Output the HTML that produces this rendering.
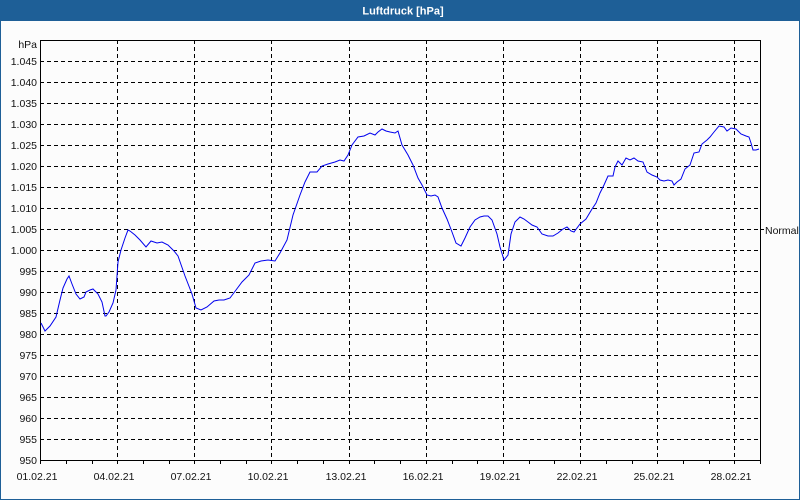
<!DOCTYPE html>
<html><head><meta charset="utf-8"><style>
html,body{margin:0;padding:0;width:800px;height:500px;overflow:hidden;background:#fcfcfc}
svg{display:block}
text{font-family:"Liberation Sans",sans-serif;font-size:10.5px;fill:#111}
</style></head><body>
<svg width="800" height="500" viewBox="0 0 800 500">
<rect x="0" y="0" width="800" height="500" fill="#fcfcfc"/>
<rect x="0" y="0" width="800" height="21" fill="#1e5f97"/>
<rect x="0.5" y="0.5" width="799" height="499" fill="none" stroke="#1e5f97"/>
<text x="403" y="14.5" text-anchor="middle" style="font-weight:bold;fill:#fff;font-size:11px">Luftdruck [hPa]</text>
<g stroke="#000" stroke-width="1" stroke-dasharray="4,3">
<line x1="40" y1="61.5" x2="760" y2="61.5"/><line x1="40" y1="82.5" x2="760" y2="82.5"/><line x1="40" y1="103.5" x2="760" y2="103.5"/><line x1="40" y1="124.5" x2="760" y2="124.5"/><line x1="40" y1="145.5" x2="760" y2="145.5"/><line x1="40" y1="166.5" x2="760" y2="166.5"/><line x1="40" y1="187.5" x2="760" y2="187.5"/><line x1="40" y1="208.5" x2="760" y2="208.5"/><line x1="40" y1="229.5" x2="760" y2="229.5"/><line x1="40" y1="250.5" x2="760" y2="250.5"/><line x1="40" y1="271.5" x2="760" y2="271.5"/><line x1="40" y1="292.5" x2="760" y2="292.5"/><line x1="40" y1="313.5" x2="760" y2="313.5"/><line x1="40" y1="334.5" x2="760" y2="334.5"/><line x1="40" y1="355.5" x2="760" y2="355.5"/><line x1="40" y1="376.5" x2="760" y2="376.5"/><line x1="40" y1="397.5" x2="760" y2="397.5"/><line x1="40" y1="418.5" x2="760" y2="418.5"/><line x1="40" y1="439.5" x2="760" y2="439.5"/>
<line x1="117.5" y1="40" x2="117.5" y2="460"/><line x1="194.5" y1="40" x2="194.5" y2="460"/><line x1="271.5" y1="40" x2="271.5" y2="460"/><line x1="349.5" y1="40" x2="349.5" y2="460"/><line x1="426.5" y1="40" x2="426.5" y2="460"/><line x1="503.5" y1="40" x2="503.5" y2="460"/><line x1="580.5" y1="40" x2="580.5" y2="460"/><line x1="657.5" y1="40" x2="657.5" y2="460"/><line x1="734.5" y1="40" x2="734.5" y2="460"/>
</g>
<rect x="40.5" y="40.5" width="720" height="420" fill="none" stroke="#000"/>
<g stroke="#000">
<path d="M66.5 460v4M92.5 460v4M143.5 460v4M169.5 460v4M220.5 460v4M246.5 460v4M297.5 460v4M323.5 460v4M374.5 460v4M400.5 460v4M452.5 460v4M477.5 460v4M529.5 460v4M554.5 460v4M606.5 460v4M632.5 460v4M683.5 460v4M709.5 460v4M40.5 460v4M117.5 460v4M194.5 460v4M271.5 460v4M349.5 460v4M426.5 460v4M503.5 460v4M580.5 460v4M657.5 460v4M734.5 460v4M760.5 460v4M760 229.5h4"/>
</g>
<polyline fill="none" stroke="#0000ee" stroke-width="1" points="41,323 45,331 50,326 56,317 60,300 63,288 67,279 69,276 72,284 76,294 80,299 84,297 86,292 90,290 93,289 98,294 102,302 105,316 106,316 109,312 113,303 116,290 118,262 121,250 125,238 128,230 130,231 135,235 140,240 146,247 151,241 157,243 162,242 168,245 174,251 178,256 185,276 192,294 196,308 201,310 207,307 214,301 219,300 224,300 230,298 236,290 242,282 249,275 255,263 261,261 268,260 275,261 280,253 287,240 293,215 300,195 305,182 310,172 317,172 322,166 328,164 335,162 340,160 344,161 348,155 352,145 358,137 364,136 370,133 375,135 378,132 382,129 386,131 390,132 395,133 398,131 402,145 408,155 413,165 418,178 422,185 427,195 431,196 435,195 438,197 442,208 447,219 452,232 456,243 461,246 465,238 470,227 475,220 480,217 484,216 488,216 492,220 497,234 500,247 504,260 508,255 511,234 515,222 520,217 524,219 528,222 532,225 537,227 542,234 548,236 553,236 558,233 563,229 567,227 571,231 574,232 580,224 586,219 592,209 596,203 600,193 604,185 608,176 613,176 615,167 618,161 622,165 626,158 630,160 634,158 638,161 643,162 647,172 652,175 657,177 660,180 664,181 668,180 672,181 674,185 677,182 681,179 685,169 690,165 694,153 699,152 702,144 707,140 710,137 714,132 719,126 724,127 727,131 731,128 736,129 741,134 746,136 749,137 751,143 753,150 756,150 759,149"/>
<g text-anchor="end">
<text x="37" y="48">hPa</text>
<text x="37" y="65">1.045</text><text x="37" y="86">1.040</text><text x="37" y="107">1.035</text><text x="37" y="128">1.030</text><text x="37" y="149">1.025</text><text x="37" y="170">1.020</text><text x="37" y="191">1.015</text><text x="37" y="212">1.010</text><text x="37" y="233">1.005</text><text x="37" y="254">1.000</text><text x="37" y="275">995</text><text x="37" y="296">990</text><text x="37" y="317">985</text><text x="37" y="338">980</text><text x="37" y="359">975</text><text x="37" y="380">970</text><text x="37" y="401">965</text><text x="37" y="422">960</text><text x="37" y="443">955</text><text x="37" y="464">950</text>
</g>
<g text-anchor="middle">
<text x="37" y="480">01.02.21</text><text x="114" y="480">04.02.21</text><text x="191" y="480">07.02.21</text><text x="268" y="480">10.02.21</text><text x="346" y="480">13.02.21</text><text x="423" y="480">16.02.21</text><text x="500" y="480">19.02.21</text><text x="577" y="480">22.02.21</text><text x="654" y="480">25.02.21</text><text x="731" y="480">28.02.21</text>
</g>
<text x="765" y="234">Normal</text>
</svg>
</body></html>
